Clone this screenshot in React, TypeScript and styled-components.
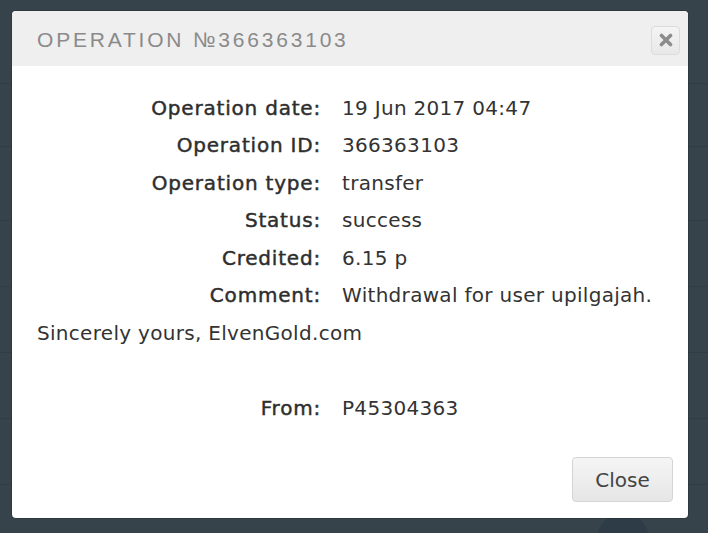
import React from "react";
import styled, { createGlobalStyle } from "styled-components";

const GlobalStyle = createGlobalStyle`
  html, body {
    margin: 0;
    padding: 0;
    width: 708px;
    height: 533px;
    overflow: hidden;
    background: #36434b;
  }
`;

const Page = styled.div`
  position: relative;
  width: 708px;
  height: 533px;
  overflow: hidden;
  background: #36434b;
  font-family: "DejaVu Sans", sans-serif;
`;

/* faint page content behind the overlay */
const BackRows = styled.div`
  display: flex;
  flex-direction: column;
  padding-top: 83px;
`;

const BackRow = styled.div<{ $h: number }>`
  height: ${(p) => p.$h}px;
  border-top: 1px solid #313d44;
`;

const Avatar = styled.div`
  position: absolute;
  left: 597px;
  top: 513px;
  width: 52px;
  height: 52px;
  border-radius: 50%;
  background: #2d3c46;
`;

const Modal = styled.div`
  position: absolute;
  left: 12px;
  top: 11px;
  width: 676px;
  height: 507px;
  background: #fff;
  border-radius: 4px;
  display: flex;
  flex-direction: column;
  overflow: hidden;
  box-shadow: 0 0 0 1px rgba(0, 0, 0, 0.15);
`;

const Header = styled.div`
  height: 55px;
  flex: none;
  background: #efefef;
  display: flex;
  align-items: center;
  justify-content: space-between;
  padding: 0 8px 0 25px;
`;

const Title = styled.h4`
  margin: 2px 0 0;
  font-family: "Liberation Sans", sans-serif;
  font-weight: normal;
  font-size: 21px;
  letter-spacing: 2.8px;
  color: #8a8a8a;
  text-transform: uppercase;
`;

const XButton = styled.button`
  width: 29px;
  height: 29px;
  padding: 0;
  border: 1px solid #dcdcdc;
  border-radius: 4px;
  background: linear-gradient(#f4f4f4, #e8e8e8);
  display: flex;
  align-items: center;
  justify-content: center;
  margin-top: 3px;
`;

const Body = styled.div`
  flex: 1;
  padding: 23px 25px 0;
`;

const Grid = styled.div`
  display: grid;
  grid-template-columns: 284px 1fr;
  column-gap: 21px;
  grid-auto-rows: 37.5px;
  align-items: center;
  font-size: 20px;
  letter-spacing: 0.3px;
  color: #333;
`;

const Label = styled.div`
  text-align: right;
  letter-spacing: 0.8px;
  color: #2e2e2e;
  -webkit-text-stroke: 0.45px #2e2e2e;
`;

const Value = styled.div`
  white-space: nowrap;
`;

const Wide = styled.div`
  grid-column: 1 / -1;
`;

const Footer = styled.div`
  display: flex;
  justify-content: flex-end;
  padding: 0 15px 16px;
`;

const CloseButton = styled.button`
  width: 101px;
  height: 45px;
  border: 1px solid #d4d4d4;
  border-radius: 4px;
  background: linear-gradient(#f5f5f5, #e6e6e6);
  font-family: "DejaVu Sans", sans-serif;
  font-size: 20px;
  color: #444;
`;

const rows: [string, string][] = [
  ["Operation date:", "19 Jun 2017 04:47"],
  ["Operation ID:", "366363103"],
  ["Operation type:", "transfer"],
  ["Status:", "success"],
  ["Credited:", "6.15 р"],
  ["Comment:", "Withdrawal for user upilgajah."],
];

export default function App() {
  return (
    <Page>
      <GlobalStyle />
      <BackRows>
        {[62, 73, 65, 65, 65, 65, 65].map((h, i) => (
          <BackRow key={i} $h={h} />
        ))}
      </BackRows>
      <Avatar />
      <Modal>
        <Header>
          <Title>Operation №366363103</Title>
          <XButton aria-label="close">
            <svg width="14" height="14" viewBox="0 0 14 14">
              <path
                d="M2.5 2.5 L11.5 11.5 M11.5 2.5 L2.5 11.5"
                stroke="#8c8c8c"
                strokeWidth="3.6"
                strokeLinecap="round"
              />
            </svg>
          </XButton>
        </Header>
        <Body>
          <Grid>
            {rows.map(([l, v]) => (
              <React.Fragment key={l}>
                <Label>{l}</Label>
                <Value>{v}</Value>
              </React.Fragment>
            ))}
            <Wide>Sincerely yours, ElvenGold.com</Wide>
            <Wide />
            <Label>From:</Label>
            <Value>P45304363</Value>
          </Grid>
        </Body>
        <Footer>
          <CloseButton>Close</CloseButton>
        </Footer>
      </Modal>
    </Page>
  );
}
